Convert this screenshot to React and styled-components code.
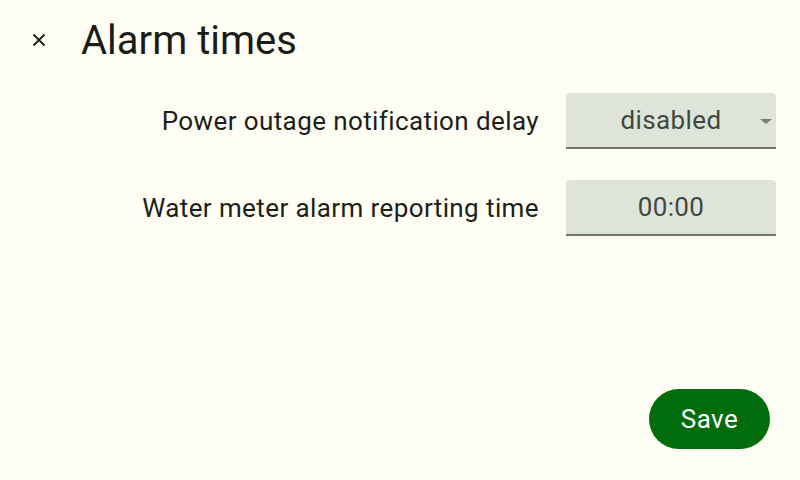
import React, { useState } from 'react';
import styled, { createGlobalStyle } from 'styled-components';

const GlobalStyle = createGlobalStyle`
  html, body {
    margin: 0;
    padding: 0;
    background: #fefef4;
    font-family: Roboto, "Liberation Sans", sans-serif;
  }
`;

export default function App() {
  const [delay] = useState('disabled');
  const [time] = useState('00:00');

  return (
    <Page>
      <GlobalStyle />
      <Header>
        <CloseBtn aria-label="Close">
          <svg width="16" height="16" viewBox="0 0 16 16">
            <path d="M2.5 2.5 L13.5 13.5 M13.5 2.5 L2.5 13.5" stroke="#1b1c17" strokeWidth="1.8" />
          </svg>
        </CloseBtn>
        <Title>Alarm times</Title>
      </Header>

      <Form>
        <Label>Power outage notification delay</Label>
        <Field>
          <FieldText>{delay}</FieldText>
          <Caret />
        </Field>

        <Label>Water meter alarm reporting time</Label>
        <Field>
          <FieldText>{time}</FieldText>
        </Field>
      </Form>

      <Footer>
        <SaveBtn>Save</SaveBtn>
      </Footer>
    </Page>
  );
}

const Page = styled.div`
  width: 800px;
  height: 480px;
  display: flex;
  flex-direction: column;
  background: #fefef4;
  color: #1b1c17;
  overflow: hidden;
`;

const Header = styled.div`
  display: flex;
  align-items: center;
  height: 80px;
  padding-left: 31px;
  gap: 34px;
`;

const CloseBtn = styled.button`
  background: transparent;
  border: none;
  padding: 0;
  width: 16px;
  height: 16px;
  display: flex;
  cursor: pointer;
`;

const Title = styled.h1`
  margin: 0;
  font-size: 40px;
  font-weight: 400;
  letter-spacing: 0;
`;

const Form = styled.div`
  display: grid;
  grid-template-columns: 1fr 210px;
  column-gap: 27px;
  row-gap: 31px;
  align-items: center;
  padding: 13px 24px 0 0;
`;

const Label = styled.div`
  text-align: right;
  font-size: 26px;
  letter-spacing: 0.4px;
  color: #1d1e19;
`;

const Field = styled.div`
  position: relative;
  height: 54px;
  background: #dfe4db;
  border-radius: 4px 4px 0 0;
  border-bottom: 2px solid #6f7867;
  display: flex;
  align-items: center;
  justify-content: center;
`;

const FieldText = styled.span`
  font-size: 26px;
  color: #41483e;
  letter-spacing: 0.4px;
`;

const Caret = styled.span`
  position: absolute;
  right: 4px;
  top: 26px;
  width: 0;
  height: 0;
  border-left: 6px solid transparent;
  border-right: 6px solid transparent;
  border-top: 5px solid #7a8074;
`;

const Footer = styled.div`
  margin-top: auto;
  display: flex;
  justify-content: flex-end;
  padding: 0 30px 31px 0;
`;

const SaveBtn = styled.button`
  height: 60px;
  width: 121px;
  border: none;
  border-radius: 30px;
  background: #006c0c;
  color: #ffffff;
  font-family: Roboto, "Liberation Sans", sans-serif;
  font-size: 26px;
  letter-spacing: 0.5px;
  cursor: pointer;
`;
